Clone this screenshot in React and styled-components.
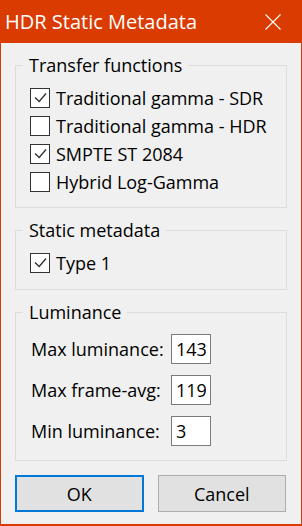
import React, { useState } from 'react';
import styled, { createGlobalStyle } from 'styled-components';

const GlobalStyle = createGlobalStyle`
  html, body {
    margin: 0;
    padding: 0;
    background: #f0f0f0;
  }
  * {
    box-sizing: border-box;
  }
`;

const Window = styled.div`
  width: 302px;
  height: 526px;
  display: flex;
  flex-direction: column;
  border: 1px solid #da3b01;
  border-top: none;
  border-bottom-width: 2px;
  background: #f0f0f0;
  font-family: "Open Sans", "Noto Sans", sans-serif;
  font-size: 18px;
  color: #000;
`;

const TitleBar = styled.div`
  height: 43px;
  margin: 0 -1px;
  padding: 0 21px 0 5px;
  display: flex;
  align-items: center;
  justify-content: space-between;
  background: #da3b01;
  color: #fff;
  font-size: 20px;
`;

const CloseButton = styled.button`
  width: 16px;
  height: 16px;
  padding: 0;
  border: none;
  background: transparent;
  display: flex;
  cursor: pointer;
`;

const Body = styled.div`
  flex: 1;
  display: flex;
  flex-direction: column;
  gap: 11px;
  padding: 11px 14px 0;
`;

const Group = styled.fieldset`
  margin: 0;
  border: 1px solid #dcdcdc;
  padding: ${p => p.$pad || '8px 14px 11px'};
  min-width: 0;
`;

const Legend = styled.legend`
  padding: 0 6px;
  margin-left: -7px;
  line-height: 22px;
`;

const CheckRow = styled.label`
  height: 28px;
  display: flex;
  align-items: center;
  gap: 6px;
  line-height: 20px;
  cursor: default;
`;

const Box = styled.span`
  width: 20px;
  height: 20px;
  flex: none;
  border: 1px solid #333;
  background: #fff;
  display: flex;
`;

const FieldGrid = styled.div`
  display: grid;
  grid-template-columns: 140px 40px;
  row-gap: 11px;
  align-items: center;
  padding-left: 1px;
`;

const NumberInput = styled.input`
  width: 40px;
  height: 30px;
  border: 1px solid #7a7a7a;
  background: #fff;
  padding: 0 4px;
  font: inherit;
  color: #000;
  outline: none;
`;

const Buttons = styled.div`
  display: grid;
  grid-template-columns: 1fr 1fr;
  gap: 14px;
  margin-top: 3px;
  padding-right: 1px;
`;

const Button = styled.button`
  height: 37px;
  background: #e1e1e1;
  border: ${p => (p.$primary ? '2px solid #0078d7' : '1px solid #adadad')};
  font: inherit;
  color: #000;
  padding: 0;
`;

const Check = ({ label, initial }) => {
  const [on, setOn] = useState(initial);
  return (
    <CheckRow onClick={() => setOn(!on)}>
      <Box>
        {on && (
          <svg width="18" height="18" viewBox="0 0 18 18">
            <polyline points="4,8.5 8.2,12.5 15,4.5" fill="none" stroke="#333" strokeWidth="1.4" />
          </svg>
        )}
      </Box>
      {label}
    </CheckRow>
  );
};

export default function App() {
  return (
    <>
      <GlobalStyle />
      <Window>
        <TitleBar>
          HDR Static Metadata
          <CloseButton aria-label="Close">
            <svg width="16" height="16" viewBox="0 0 16 16">
              <path d="M0.5 0.5 L15.5 15.5 M15.5 0.5 L0.5 15.5" stroke="#fff" strokeWidth="1.1" />
            </svg>
          </CloseButton>
        </TitleBar>
        <Body>
          <Group>
            <Legend>Transfer functions</Legend>
            <Check label="Traditional gamma - SDR" initial />
            <Check label="Traditional gamma - HDR" initial={false} />
            <Check label="SMPTE ST 2084" initial />
            <Check label="Hybrid Log-Gamma" initial={false} />
          </Group>
          <Group $pad="8px 14px 12px">
            <Legend>Static metadata</Legend>
            <Check label="Type 1" initial />
          </Group>
          <Group $pad="11px 14px 14px">
            <Legend>Luminance</Legend>
            <FieldGrid>
              <span>Max luminance:</span>
              <NumberInput defaultValue="143" />
              <span>Max frame-avg:</span>
              <NumberInput defaultValue="119" />
              <span>Min luminance:</span>
              <NumberInput defaultValue="3" />
            </FieldGrid>
          </Group>
          <Buttons>
            <Button $primary>OK</Button>
            <Button>Cancel</Button>
          </Buttons>
        </Body>
      </Window>
    </>
  );
}
